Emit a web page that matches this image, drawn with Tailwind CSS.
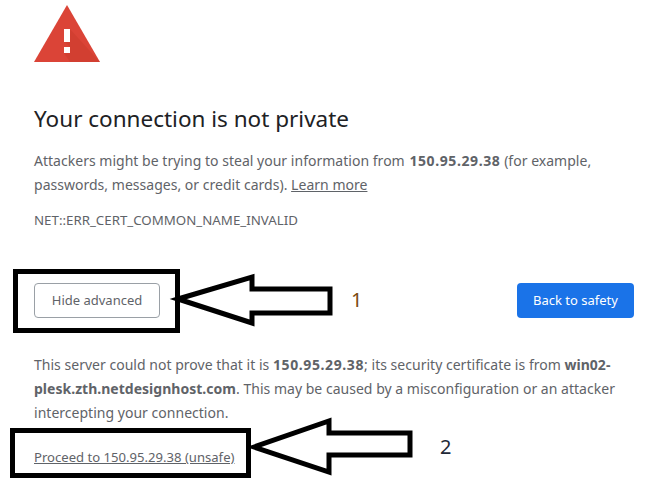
<!DOCTYPE html>
<html lang="en">
<head>
    <meta charset="UTF-8">
    <title>Privacy error</title>
    <script src="https://cdn.jsdelivr.net/npm/@tailwindcss/browser@4"></script>
</head>
<body class="bg-white font-['Noto_Sans',sans-serif]">
    <div class="relative w-[652px] h-[481px] overflow-hidden">
        <main class="w-[634px] pl-[34px] pt-[5px] text-[14px] text-[#5f6368]">
            <!-- Warning icon -->
            <svg class="block" width="66" height="57" viewBox="0 0 66 57">
                <polygon points="33,0 66,57 0,57" fill="#db4437"/>
                <polygon points="36,24 66,57 36,57 30,48 36,42 30,36" fill="#c53929" opacity="0.4"/>
                <rect x="30" y="24" width="6" height="13" fill="#fff"/>
                <rect x="30" y="42" width="6" height="6" fill="#fff"/>
            </svg>

            <h1 class="mt-[41px] text-[22.5px] leading-[32px] font-normal text-[#202124]">Your connection is not private</h1>

            <p class="mt-[14px] text-[14px] leading-[24px] tracking-[0.02px]">Attackers might be trying to steal your information from <b class="ml-[1px] font-bold tracking-[0.6px]">150.95.29.38</b> (for example, passwords, messages, or credit cards). <a href="#" class="underline">Learn more</a></p>

            <p class="mt-[15px] text-[13.3px] leading-[16px]">NET::ERR_CERT_COMMON_NAME_INVALID</p>

            <!-- Buttons -->
            <div class="mt-[55px] flex justify-between">
                <button class="w-[126px] h-[35px] border border-[#9aa0a6] rounded-[4px] text-[13px] text-[#5f6368] bg-white">Hide advanced</button>
                <button class="w-[117px] h-[35px] rounded-[4px] text-[13px] text-white bg-[#1a73e8]">Back to safety</button>
            </div>

            <p class="mt-[35px] text-[14px] leading-[24px] tracking-[0.02px]">This server could not prove that it is <b class="font-bold tracking-[0.6px]">150.95.29.38</b>; its security certificate is from <b class="font-bold">win02-plesk.zth.netdesignhost.com</b>. This may be caused by a misconfiguration or an attacker intercepting your connection.</p>

            <p class="mt-[20px] text-[13.1px] leading-[24px]"><a href="#" class="underline">Proceed to 150.95.29.38 (unsafe)</a></p>
        </main>

        <!-- Annotations drawn over the screenshot -->
        <div class="absolute left-[13px] top-[269px] w-[167px] h-[64px] border-[5px] border-black"></div>
        <div class="absolute left-[10px] top-[428px] w-[241px] h-[50px] border-[5px] border-black"></div>
        <svg class="absolute left-0 top-0" width="652" height="481" fill="none" stroke="#000" stroke-width="5">
            <polygon points="178,299 252,277 252,289 330,289 330,313 252,313 252,323"/>
            <polygon points="254,447 329,421 329,433 410,433 410,455 329,455 329,472"/>
        </svg>
        <span class="absolute left-[351px] top-[286px] text-[20px] leading-[28px] text-[#7a4a10]">1</span>
        <span class="absolute left-[440px] top-[433px] text-[20px] leading-[28px] text-[#1f2937]">2</span>
    </div>
</body>
</html>
